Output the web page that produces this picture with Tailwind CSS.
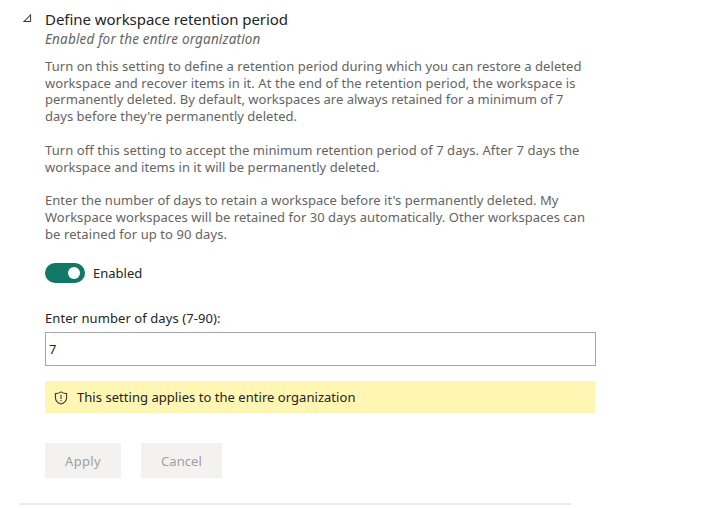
<!DOCTYPE html>
<html lang="en"><head><meta charset="utf-8"><title>Workspace retention</title>
<script src="https://cdn.jsdelivr.net/npm/@tailwindcss/browser@4"></script></head>
<body class="h-[508px] overflow-hidden bg-white font-['Noto_Sans',sans-serif] text-[13px] text-[#252423]">
<main class="pl-[45px]">
  <header class="relative pt-[9px] whitespace-nowrap">
    <svg class="absolute top-[13px] left-[-23px] size-[11px]" viewBox="0 0 11 11" fill="#3a3938" fill-rule="evenodd"><path d="M.8 9.1H9.1V.8ZM3.1 8.1H8.1V3.1Z"/></svg>
    <h1 class="h-[21px] text-[15px] leading-5 tracking-[-0.049px]">Define workspace retention period</h1>
    <p class="h-[18px] leading-[18px] text-[13.5px] tracking-[0.17px] italic text-[#666462]">Enabled for the entire organization</p>
  </header>
  <section class="mt-[9.8px] flex flex-col gap-[16.8px] leading-[16.8px] whitespace-nowrap text-[#666462]">
    <p>
      <span class="block tracking-[0.054px]">Turn on this setting to define a retention period during which you can restore a deleted</span>
      <span class="block tracking-[0.057px]">workspace and recover items in it. At the end of the retention period, the workspace is</span>
      <span class="block tracking-[0.01px]">permanently deleted. By default, workspaces are always retained for a minimum of 7</span>
      <span class="block tracking-[0.014px]">days before they're permanently deleted.</span>
    </p>
    <p>
      <span class="block tracking-[0.065px]">Turn off this setting to accept the minimum retention period of 7 days. After 7 days the</span>
      <span class="block tracking-[0.039px]">workspace and items in it will be permanently deleted.</span>
    </p>
    <p>
      <span class="block tracking-[0.036px]">Enter the number of days to retain a workspace before it's permanently deleted. My</span>
      <span class="block tracking-[0.029px]">Workspace workspaces will be retained for 30 days automatically. Other workspaces can</span>
      <span class="block tracking-[0.082px]">be retained for up to 90 days.</span>
    </p>
  </section>
  <div class="mt-[20.2px] flex h-5 items-center gap-2">
    <div role="switch" aria-checked="true" class="flex h-5 w-10 items-center justify-end rounded-full bg-[#117865] pr-[5px]"><span class="size-3 rounded-full bg-white"></span></div>
    <span class="leading-5">Enabled</span>
  </div>
  <label for="days" class="mt-[25px] block h-[21px] leading-5 tracking-[0.076px]">Enter number of days (7-90):</label>
  <input id="days" value="7" class="mt-[3px] block h-[34px] w-[551px] border border-[#a6a6a6] bg-white px-[3px] outline-none">
  <div class="mt-[15px] flex h-8 w-[550px] items-center bg-[#fef6b2] pl-[9px]">
    <svg class="mt-[2px] size-[14px]" viewBox="0 0 14 14" fill="none" stroke="#3b3a39" stroke-width="1.1"><path d="M7 .9C5.5 2.1 3.5 2.6 1.4 2.6V6.6C1.4 9.8 3.5 12 7 13.1C10.5 12 12.6 9.8 12.6 6.6V2.6C10.5 2.6 8.5 2.1 7 .9Z"/><path d="M7 3.8V8M7 9V10.2"/></svg>
    <span class="ml-[9px] pt-[2px] tracking-[0.04px]">This setting applies to the entire organization</span>
  </div>
  <div class="mt-[30px] flex gap-5 text-[#a19f9d]">
    <button class="h-[35px] w-[76px] bg-[#f3f2f1] pt-[2px] tracking-[0.3px]" disabled>Apply</button>
    <button class="h-[35px] w-[81px] bg-[#f3f2f1] pt-[2px] tracking-[0.08px]" disabled>Cancel</button>
  </div>
</main>
<div class="mt-[25px] ml-[19px] h-[2px] w-[552px] bg-[#eaeaea]"></div>
</body></html>
